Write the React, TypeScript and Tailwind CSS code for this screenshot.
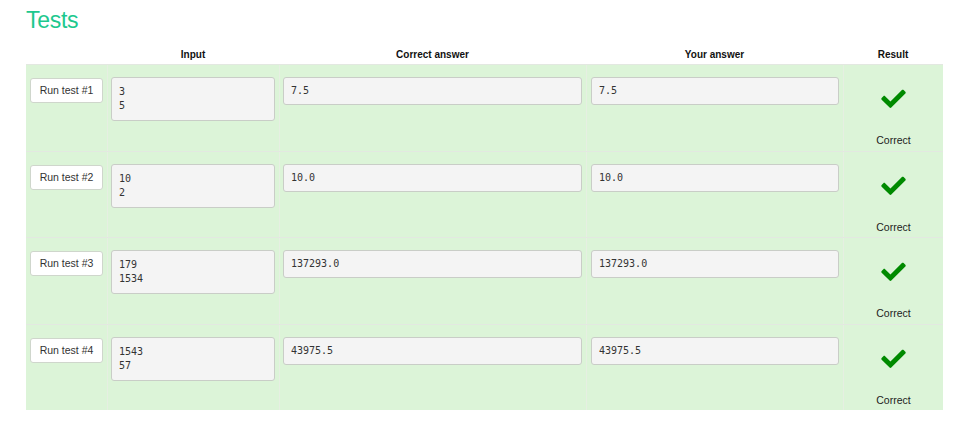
const tests = [
  { n: 1, input: ["3", "5"], correct: "7.5", yours: "7.5" },
  { n: 2, input: ["10", "2"], correct: "10.0", yours: "10.0" },
  { n: 3, input: ["179", "1534"], correct: "137293.0", yours: "137293.0" },
  { n: 4, input: ["1543", "57"], correct: "43975.5", yours: "43975.5" },
];

const cols = "grid grid-cols-[81px_172px_307px_257px_100px]";
const box =
  "bg-[#f4f4f4] border border-[#c9cdc7] rounded-[3px] px-[7px] font-['DejaVu_Sans_Mono',monospace] text-[10px] leading-[14px] text-[#333]";

function Check() {
  return (
    <svg width="25" height="21" viewBox="0 0 512 440" className="text-[#008a00]">
      <path
        fill="currentColor"
        d="M173.9 431.4l-166.4-166.4c-10-10-10-26.2 0-36.2l36.2-36.2c10-10 26.2-10 36.2 0L192 304.7 432.1 64.6c10-10 26.2-10 36.2 0l36.2 36.2c10 10 10 26.2 0 36.2l-294.4 294.4c-10 10-26.2 10-36.2 0z"
      />
    </svg>
  );
}

export default function App() {
  return (
    <div className="w-[960px] h-[428px] bg-white px-[26px] pt-[7px] font-['Liberation_Sans',Arial,sans-serif] text-[#222]">
      <h1 className="text-[23px] leading-[26px] text-[#1dc88e] tracking-[-0.3px]">Tests</h1>
      <div className="w-[917px] mt-[11px]">
        <div className={`${cols} h-[20px] text-[10px] font-bold items-center text-center text-[#111]`}>
          <div></div>
          <div>Input</div>
          <div>Correct answer</div>
          <div>Your answer</div>
          <div>Result</div>
        </div>
        {tests.map((t) => (
          <div key={t.n} className={`${cols} h-[86.5px] bg-[#dcf4d8] border-t border-[#e3e8e1]`}>
            <div className="px-[4px] pt-[12px]">
              <button className="w-[73px] h-[25px] bg-white border border-[#cfd6cc] rounded-[3px] text-[10.5px] text-[#333]">
                Run test #{t.n}
              </button>
            </div>
            <div className="border-l border-[#e6efe2] pl-[3px] pr-[4px] pt-[12px]">
              <div className={`${box} py-[7px]`}>
                {t.input.map((l) => (
                  <div key={l}>{l}</div>
                ))}
              </div>
            </div>
            <div className="border-l border-[#e6efe2] pl-[3px] pr-[4px] pt-[12px]">
              <div className={`${box} py-[6px]`}>{t.correct}</div>
            </div>
            <div className="border-l border-[#e6efe2] pl-[4px] pr-[4px] pt-[12px]">
              <div className={`${box} py-[6px]`}>{t.yours}</div>
            </div>
            <div className="border-l border-[#e6efe2] flex flex-col items-center pt-[22px]">
              <Check />
              <div className="mt-[25px] text-[10.5px] text-[#222]">Correct</div>
            </div>
          </div>
        ))}
      </div>
    </div>
  );
}
